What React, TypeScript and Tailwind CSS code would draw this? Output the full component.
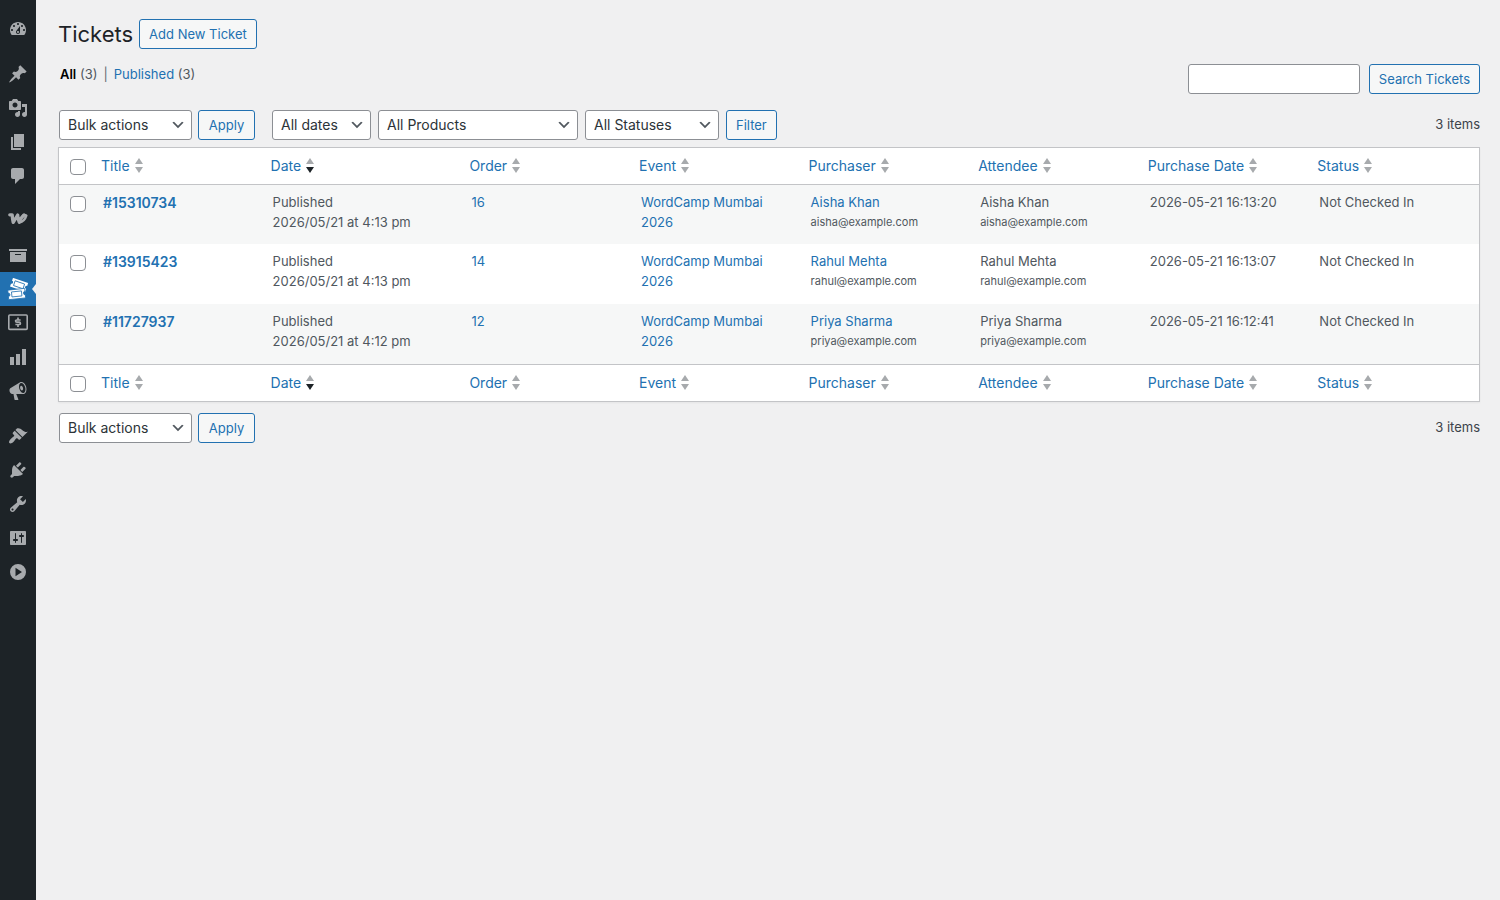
import { useState } from 'react';
import type { ReactNode } from 'react';
import clsx from 'clsx';

type Ticket = {
  id: string;
  date: string;
  order: string;
  event: string;
  name: string;
  email: string;
  purchased: string;
};

const tickets: Ticket[] = [
  { id: '15310734', date: '2026/05/21 at 4:13 pm', order: '16', event: 'WordCamp Mumbai 2026', name: 'Aisha Khan', email: 'aisha@example.com', purchased: '2026-05-21 16:13:20' },
  { id: '13915423', date: '2026/05/21 at 4:13 pm', order: '14', event: 'WordCamp Mumbai 2026', name: 'Rahul Mehta', email: 'rahul@example.com', purchased: '2026-05-21 16:13:07' },
  { id: '11727937', date: '2026/05/21 at 4:12 pm', order: '12', event: 'WordCamp Mumbai 2026', name: 'Priya Sharma', email: 'priya@example.com', purchased: '2026-05-21 16:12:41' },
];

const columns = ['Title', 'Date', 'Order', 'Event', 'Purchaser', 'Attendee', 'Purchase Date', 'Status'];

const paths = {
  dashboard: 'M3.76 16h12.48c1.1-1.37 1.76-3.11 1.76-5 0-4.42-3.58-8-8-8s-8 3.58-8 8c0 1.89.66 3.63 1.76 5zM10 4c.55 0 1 .45 1 1s-.45 1-1 1-1-.45-1-1 .45-1 1-1zM6 6c.55 0 1 .45 1 1s-.45 1-1 1-1-.45-1-1 .45-1 1-1zm8 0c.55 0 1 .45 1 1s-.45 1-1 1-1-.45-1-1 .45-1 1-1zm-5.37 5.55L12 7v6c0 1.1-.9 2-2 2s-2-.9-2-2c0-.57.24-1.08.63-1.45zM4 10c.55 0 1 .45 1 1s-.45 1-1 1-1-.45-1-1 .45-1 1-1zm12 0c.55 0 1 .45 1 1s-.45 1-1 1-1-.45-1-1 .45-1 1-1zm-5 3c0-.55-.45-1-1-1s-1 .45-1 1 .45 1 1 1 1-.45 1-1z',
  pin: 'M10.44 3.02l1.82-1.82 6.36 6.35-1.83 1.82c-1.05-.68-2.48-.57-3.41.36l-.75.75c-.92.93-1.04 2.35-.35 3.41l-1.83 1.82-2.41-2.41-2.8 2.79c-.42.42-3.38 2.71-3.8 2.29s1.86-3.39 2.28-3.81l2.79-2.79L4.1 9.36l1.83-1.82c1.05.69 2.48.57 3.4-.36l.75-.75c.93-.92 1.05-2.35.36-3.41z',
  media: 'M13 11V4c0-.55-.45-1-1-1h-1.67L9 1H5L3.67 3H2c-.55 0-1 .45-1 1v7c0 .55.45 1 1 1h10c.55 0 1-.45 1-1zM7 4.5c1.38 0 2.5 1.12 2.5 2.5S8.38 9.5 7 9.5 4.5 8.38 4.5 7 5.62 4.5 7 4.5zM14 6h5v10.5c0 1.38-1.12 2.5-2.5 2.5S14 17.88 14 16.5s1.12-2.5 2.5-2.5c.17 0 .34.02.5.05V9h-3V6zm-4 8.05V13h2v3.5c0 1.38-1.12 2.5-2.5 2.5S7 17.88 7 16.5 8.12 14 9.5 14c.17 0 .34.02.5.05z',
  page: 'M6 15V2h10v13H6zm-1 1h8v2H3V5h2v11z',
  comment: 'M5 2h9c1.1 0 2 .9 2 2v7c0 1.1-.9 2-2 2h-2l-5 5v-5H5c-1.1 0-2-.9-2-2V4c0-1.1.9-2 2-2z',
  archive: 'M19 4v2H1V4h18zM2 7h16v10H2V7zm11 3V9H7v1h6z',
  chart: 'M18 18V2h-4v16h4zm-6 0V7H8v11h4zm-6 0v-8H2v8h4z',
  megaphone: 'M18.15 5.94c.46 1.62.38 3.22-.02 4.48-.42 1.28-1.26 2.18-2.3 2.48-.16.06-.26.06-.4.06-.06.02-.12.02-.18.02-.06.02-.14.02-.22.02h-6.8l2.22 5.5c.02.14-.06.26-.14.34-.08.1-.24.16-.34.16H6.95c-.1 0-.26-.06-.34-.16-.08-.08-.16-.2-.14-.34l-1-5.5H4.25l-.02-.02c-.5.06-1.08-.18-1.54-.62s-.88-1.08-1.06-1.88c-.24-.8-.2-1.56-.02-2.2.18-.62.58-1.08 1.06-1.3l.02-.02 9-5.4c.1-.06.18-.1.24-.16.06-.04.14-.08.24-.12.16-.08.28-.12.5-.18 1.04-.3 2.24.1 3.22.98s1.84 2.24 2.26 3.86zm-2.58 5.98h-.02c.4-.1.74-.34 1.04-.7.58-.7.86-1.76.86-3.04 0-.64-.1-1.3-.28-1.98-.34-1.36-1.02-2.5-1.78-3.24s-1.68-1.1-2.46-.88c-.82.22-1.4.96-1.7 2-.32 1.04-.28 2.36.06 3.72.38 1.36 1 2.5 1.8 3.24.78.74 1.62 1.1 2.48.88zm-2.54-7.08c.22-.04.42-.02.62.04.38.16.76.48 1.02 1s.42 1.2.42 1.78c0 .3-.04.56-.12.8-.18.48-.44.84-.86.94-.34.1-.8-.06-1.14-.4s-.64-.86-.78-1.5c-.18-.62-.12-1.24.02-1.72s.48-.84.82-.94z',
  brush: 'M14.48 11.06L7.41 3.99l1.5-1.5c.5-.56 2.3-.47 3.51.32 1.21.8 1.43 1.28 2.91 2.1 1.18.64 2.45 1.26 4.45.85zm-.71.71L6.7 4.7 4.93 6.47c-.39.39-.39 1.02 0 1.41l1.06 1.06c.39.39.39 1.03 0 1.42-.6.6-1.43 1.11-2.21 1.69-.35.26-.7.53-1.01.84C1.43 14.23.4 16.08 1.4 17.07c.99 1 2.84-.03 4.18-1.36.31-.31.58-.66.85-1.02.57-.78 1.08-1.61 1.69-2.21.39-.39 1.02-.39 1.41 0l1.06 1.06c.39.39 1.02.39 1.41 0z',
  plug: 'M13.11 4.36L9.87 7.6 8 5.73l3.24-3.24c.35-.34 1.05-.2 1.56.32.52.51.66 1.21.31 1.55zm-8 1.77l.91-1.12 9.01 9.01-1.19.84c-.71.71-2.63 1.16-3.82 1.16H6.14L4.9 17.26c-.59.59-1.54.59-2.12 0-.59-.58-.59-1.53 0-2.12l1.24-1.24v-3.88c0-1.13.4-3.19 1.09-3.89zm7.26 3.97l3.24-3.24c.34-.35 1.04-.21 1.55.31.52.51.66 1.21.31 1.55l-3.24 3.25z',
  wrench: 'M16.68 9.77c-1.34 1.34-3.3 1.67-4.95.99l-5.41 6.52c-.99.99-2.59.99-3.58 0s-.99-2.59 0-3.57l6.52-5.42c-.68-1.65-.35-3.61.99-4.95 1.28-1.28 3.12-1.62 4.72-1.06l-2.89 2.89 2.82 2.82 2.86-2.87c.53 1.58.18 3.39-1.08 4.65zM3.81 16.21c.4.39 1.04.39 1.43 0 .4-.4.4-1.04 0-1.43-.39-.4-1.03-.4-1.43 0-.39.39-.39 1.03 0 1.43z',
  settings: 'M18 16V4c0-.55-.45-1-1-1H3c-.55 0-1 .45-1 1v12c0 .55.45 1 1 1h14c.55 0 1-.45 1-1zM8 11h1c.55 0 1 .45 1 1s-.45 1-1 1H8v1.5c0 .28-.22.5-.5.5s-.5-.22-.5-.5V13H6c-.55 0-1-.45-1-1s.45-1 1-1h1V5.5c0-.28.22-.5.5-.5s.5.22.5.5V11zm5-2h-1c-.55 0-1-.45-1-1s.45-1 1-1h1V5.5c0-.28.22-.5.5-.5s.5.22.5.5V7h1c.55 0 1 .45 1 1s-.45 1-1 1h-1v5.5c0 .28-.22.5-.5.5s-.5-.22-.5-.5V9z',
  play: 'M10 2a8 8 0 1 0 0 16 8 8 0 0 0 0-16zM7.5 5.8v8.4l6.5-4.2z',
};

function Icon({ d }: { d: string }) {
  return (
    <svg width="20" height="20" viewBox="0 0 20 20" fill="currentColor" fillRule="evenodd" aria-hidden="true">
      <path d={d} />
    </svg>
  );
}

function WooIcon() {
  return (
    <svg width="20" height="20" viewBox="0 2.4 20 20" fill="none" stroke="currentColor" strokeWidth="3.3" strokeLinecap="round" strokeLinejoin="round" aria-hidden="true">
      <path d="M1.8 6.2h2.4c.1 2.6.4 4.900 1 7.500L9.700 6.500c.1 2.500.6 5 1.500 7.100 1.200-3.200 2.700-5.500 4.700-7.100" />
      <path strokeWidth="2.600" d="M11.400 13.800c3.100-.5 5.900-3.500 6.900-6.900-1.200-.7-2.500-.5-3.500.4" />
    </svg>
  );
}

function TicketsIcon() {
  return (
    <svg width="22" height="22" viewBox="0 0 22 22" aria-hidden="true">
      <g transform="rotate(19 12 7)">
        <path fill="#fff" d="M4 2.200h16v3a1.600 1.600 0 0 0 0 3.200v3H4v-3a1.600 1.600 0 0 0 0-3.200z" />
        <path fill="none" stroke="#2271b1" strokeWidth=".8" d="M7 4.300h10v5H7z" />
      </g>
      <g transform="rotate(-6 10 16)">
        <path fill="#fff" stroke="#2271b1" strokeWidth=".8" d="M1.200 11.200h17v3a1.700 1.700 0 0 0 0 3.400v3.200h-17v-3.200a1.700 1.700 0 0 0 0-3.400z" />
        <path fill="none" stroke="#2271b1" strokeWidth=".8" d="M4.700 13.400h10v5h-10z" />
      </g>
    </svg>
  );
}

function PaymentsIcon() {
  return (
    <svg width="20" height="20" viewBox="0 0 20 20" fill="none" stroke="currentColor" aria-hidden="true">
      <rect x=".8" y="2" width="18.4" height="14.4" rx="1" strokeWidth="1.6" />
      <path strokeWidth="1.7" d="M12.600 7H8.800c-.9 0-1.200.3-1.200 1.100s.4 1.100 1.200 1.100h2.400c.9 0 1.200.4 1.200 1.200s-.4 1.100-1.200 1.100H7.400M10 4.400v2.400M10 11.700v2.400" />
    </svg>
  );
}

type MenuItem = { label: string; icon: ReactNode; active?: boolean };

const menuGroups: MenuItem[][] = [
  [{ label: 'Dashboard', icon: <Icon d={paths.dashboard} /> }],
  [
    { label: 'Posts', icon: <Icon d={paths.pin} /> },
    { label: 'Media', icon: <Icon d={paths.media} /> },
    { label: 'Pages', icon: <Icon d={paths.page} /> },
    { label: 'Comments', icon: <Icon d={paths.comment} /> },
  ],
  [
    { label: 'WooCommerce', icon: <WooIcon /> },
    { label: 'Products', icon: <Icon d={paths.archive} /> },
    { label: 'Tickets', icon: <TicketsIcon />, active: true },
    { label: 'Payments', icon: <PaymentsIcon /> },
    { label: 'Analytics', icon: <Icon d={paths.chart} /> },
    { label: 'Marketing', icon: <Icon d={paths.megaphone} /> },
  ],
  [
    { label: 'Appearance', icon: <Icon d={paths.brush} /> },
    { label: 'Plugins', icon: <Icon d={paths.plug} /> },
    { label: 'Tools', icon: <Icon d={paths.wrench} /> },
    { label: 'Settings', icon: <Icon d={paths.settings} /> },
  ],
];

function Sidebar() {
  return (
    <nav aria-label="Main menu" className="flex w-9 shrink-0 flex-col bg-[#1d2327] pt-3 text-[#a7aaad]">
      <div className="flex flex-col gap-[11px]">
        {menuGroups.map((group, i) => (
          <ul key={i}>
            {group.map(item => (
              <li key={item.label} className={clsx('relative', item.active && 'bg-[#2271b1] text-white')}>
                <a href="#" aria-label={item.label} className="flex h-[34px] items-center justify-center pr-px hover:text-[#72aee6]">
                  {item.icon}
                </a>
                {item.active && (
                  <svg className="absolute top-3 right-0" width="4" height="10" viewBox="0 0 4 10" fill="#f0f0f1" aria-hidden="true">
                    <path d="M4 0v10L0 5z" />
                  </svg>
                )}
              </li>
            ))}
          </ul>
        ))}
      </div>
      <button type="button" aria-label="Collapse menu" className="flex h-[34px] items-center justify-center">
        <Icon d={paths.play} />
      </button>
    </nav>
  );
}

function Button({ children }: { children: ReactNode }) {
  return (
    <button type="button" className="h-[30px] rounded-[3px] border border-[#2271b1] bg-[#f6f7f7] px-[9px] pt-0.5 text-[13px] whitespace-nowrap text-[#2271b1] hover:bg-[#f0f0f1]">
      {children}
    </button>
  );
}

function Select({ label, option, width }: { label: string; option: string; width: string }) {
  return (
    <div className={clsx('relative', width)}>
      <select aria-label={label} className="h-[30px] w-full appearance-none rounded-[3px] border border-[#8c8f94] bg-white pr-6 pl-2 text-sm text-[#2c3338]">
        <option>{option}</option>
      </select>
      <svg className="pointer-events-none absolute top-[7px] right-1.5" width="16" height="16" viewBox="0 0 20 20" fill="#50575e" aria-hidden="true">
        <path d="M5 6l5 5 5-5 2 1-7 7-7-7 2-1z" />
      </svg>
    </div>
  );
}

function TableNav({ children }: { children?: ReactNode }) {
  return (
    <div className="flex items-center pl-px">
      <div className="grid grid-cols-[133px_57px] gap-1.5">
        <Select label="Select bulk action" option="Bulk actions" width="w-full" />
        <Button>Apply</Button>
      </div>
      {children}
      <span className="ml-auto">3 items</span>
    </div>
  );
}

function Checkbox({ label, checked, onChange }: { label: string; checked: boolean; onChange: () => void }) {
  return (
    <input
      type="checkbox"
      aria-label={label}
      checked={checked}
      onChange={onChange}
      className="block size-4 appearance-none rounded border border-[#8c8f94] bg-white checked:bg-[#2271b1]"
    />
  );
}

function SortArrows({ active }: { active: boolean }) {
  return (
    <svg width="8" height="15" viewBox="0 0 8 15" fill="#a7aaad" aria-hidden="true">
      <path d="M4 0l4 6H0z" />
      <path d="M0 9h8l-4 6z" className={clsx(active && 'fill-[#1d2327]')} />
    </svg>
  );
}

function HeadingRow({ checked, onToggle }: { checked: boolean; onToggle: () => void }) {
  return (
    <>
      <td className="pt-0.5 pl-[11px]">
        <Checkbox label="Select All" checked={checked} onChange={onToggle} />
      </td>
      {columns.map(name => (
        <th key={name} scope="col" className="px-2 text-left font-normal">
          <a href="#" className="flex items-center gap-[5px] text-sm text-[#2271b1]">
            {name}
            <SortArrows active={name === 'Date'} />
          </a>
        </th>
      ))}
    </>
  );
}

export default function App() {
  const [selected, setSelected] = useState<string[]>([]);
  const allSelected = selected.length === tickets.length;

  const toggle = (id: string) =>
    setSelected(selected.includes(id) ? selected.filter(s => s !== id) : [...selected, id]);
  const toggleAll = () => setSelected(allSelected ? [] : tickets.map(t => t.id));

  return (
    <div className="flex min-h-screen bg-[#f0f0f1] font-['Inter',sans-serif] text-[13px] text-[#3c434a]">
      <Sidebar />

      <main className="min-w-0 flex-1 pt-[19px] pr-5 pl-[22px]">
        <div className="flex items-center gap-1.5">
          <h1 className="text-[22px] leading-[30px] text-[#1d2327]">Tickets</h1>
          <Button>Add New Ticket</Button>
        </div>

        <div className="mt-[15px] flex items-start justify-between">
          <ul className="flex gap-1.5 pl-0.5 leading-5">
            <li className="text-[#50575e]">
              <a href="#" className="font-semibold text-black">All</a> (3)
            </li>
            <li className="text-[#646970]">|</li>
            <li className="text-[#50575e]">
              <a href="#" className="text-[#2271b1]">Published</a> (3)
            </li>
          </ul>
          <div className="flex gap-[9px]">
            <input type="search" aria-label="Search Tickets" className="h-[30px] w-[172px] rounded-[3px] border border-[#8c8f94] bg-white px-2 text-sm" />
            <Button>Search Tickets</Button>
          </div>
        </div>

        <div className="mt-4 mb-[7px]">
          <TableNav>
            <div className="ml-[17px] flex gap-[7px]">
              <Select label="Filter by date" option="All dates" width="w-[99px]" />
              <Select label="Filter by product" option="All Products" width="w-[200px]" />
              <Select label="Filter by status" option="All Statuses" width="w-[134px]" />
              <Button>Filter</Button>
            </div>
          </TableNav>
        </div>

        <div className="border border-[#c3c4c7] bg-white shadow-xs">
          <table className="w-full table-fixed border-collapse">
            <colgroup>
              <col className="w-[34px]" />
              <col />
              <col className="w-[14%]" />
              <col span={6} />
            </colgroup>
            <thead className="border-b border-[#c3c4c7]">
              <tr className="h-9">
                <HeadingRow checked={allSelected} onToggle={toggleAll} />
              </tr>
            </thead>
            <tbody>
              {tickets.map(t => (
                <tr key={t.id} className="h-[60px] align-top leading-5 text-[#50575e] odd:bg-[#f6f7f7]">
                  <td className="pt-[11px] pl-[11px]">
                    <Checkbox label={`Select #${t.id}`} checked={selected.includes(t.id)} onChange={() => toggle(t.id)} />
                  </td>
                  <td className="px-2.5 pt-2">
                    <a href="#" className="text-sm font-semibold text-[#2271b1]">#{t.id}</a>
                  </td>
                  <td className="px-2.5 pt-[7px]">
                    Published
                    <br />
                    {t.date}
                  </td>
                  <td className="px-2.5 pt-[7px]">
                    <a href="#" className="text-[#2271b1]">{t.order}</a>
                  </td>
                  <td className="px-2.5 pt-[7px]">
                    <a href="#" className="text-[#2271b1]">{t.event}</a>
                  </td>
                  <td className="px-2.5 pt-[7px]">
                    <a href="#" className="block text-[#2271b1]">{t.name}</a>
                    <span className="block text-[11px]">{t.email}</span>
                  </td>
                  <td className="px-2.5 pt-[7px]">
                    <span className="block">{t.name}</span>
                    <span className="block text-[11px]">{t.email}</span>
                  </td>
                  <td className="px-2.5 pt-[7px]">{t.purchased}</td>
                  <td className="px-2.5 pt-[7px]">Not Checked In</td>
                </tr>
              ))}
            </tbody>
            <tfoot className="border-t border-[#c3c4c7]">
              <tr className="h-[37px]">
                <HeadingRow checked={allSelected} onToggle={toggleAll} />
              </tr>
            </tfoot>
          </table>
        </div>

        <div className="mt-[11px]">
          <TableNav />
        </div>
      </main>
    </div>
  );
}
